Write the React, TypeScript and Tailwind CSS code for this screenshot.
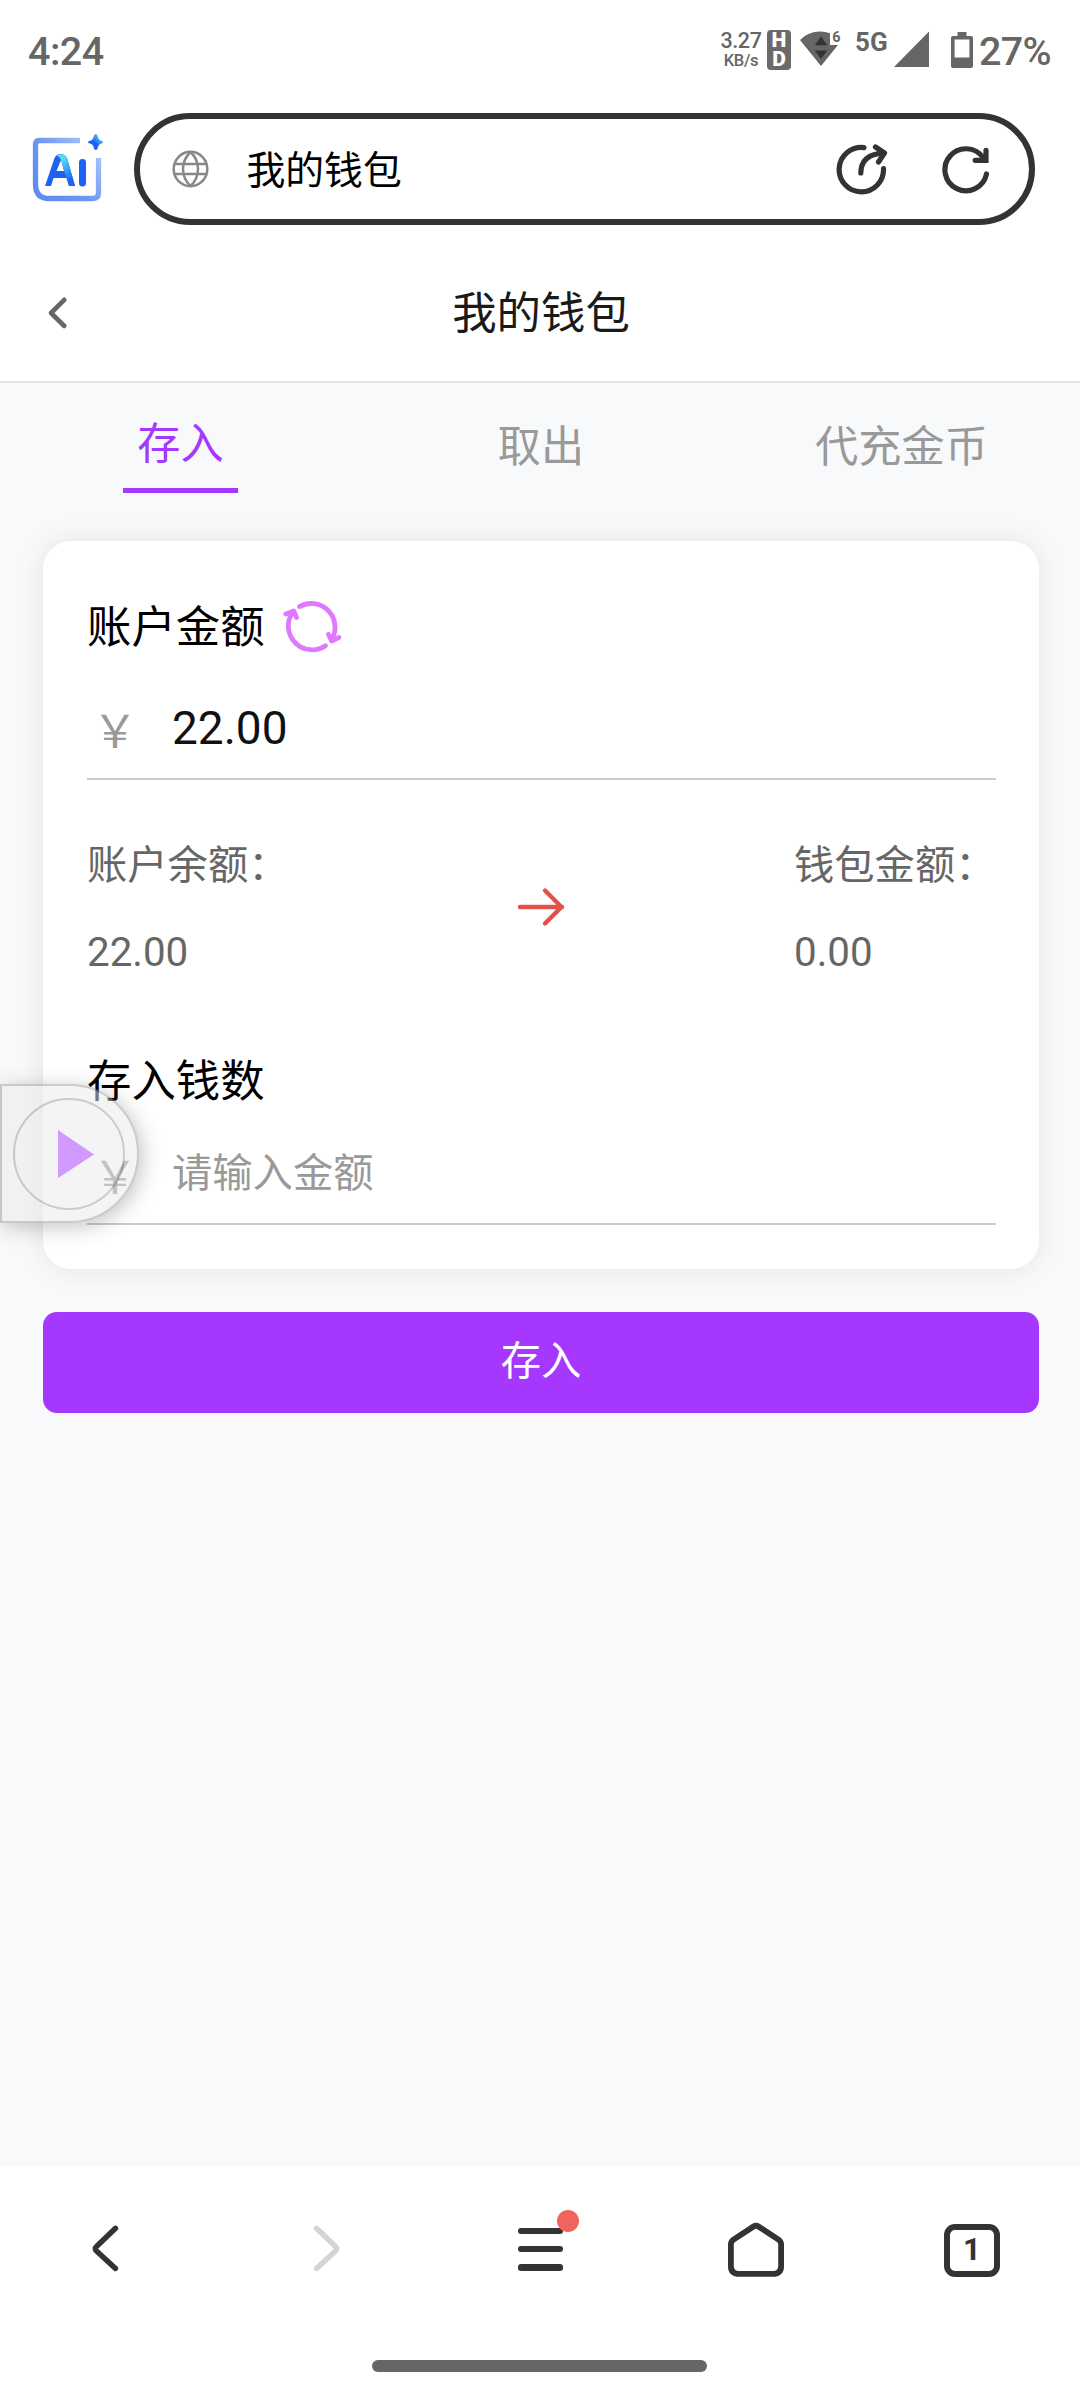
import React from "react";

const cjk = "font-['Noto_Sans_CJK_SC',sans-serif]";

function StatusBar() {
  return (
    <div className="flex h-[100px] items-start pl-[28px] font-['Roboto',sans-serif] font-medium text-[#666]">
      <div className="mt-[32px] text-[39.5px] leading-[40px] tracking-[-0.5px]">4:24</div>
      <div className="mt-[30px] ml-auto flex w-[42px] flex-col items-center">
        <span className="text-[21.5px] leading-[22px] tracking-[-0.4px]">3.27</span>
        <span className="text-[16.5px] leading-[18px] tracking-[-0.3px]">KB/s</span>
      </div>
      <div className="mt-[30px] ml-[5px] flex h-[40px] w-[24px] flex-col items-center rounded-[4px] bg-[#6a6a6a] pt-px text-[21px] font-black text-white">
        <span className="block h-[19px] leading-[19px]">H</span>
        <span className="block h-[19px] leading-[19px]">D</span>
      </div>
      <svg className="mt-[30px] ml-[9px] shrink-0" width="42" height="38" viewBox="0 0 42 38">
        <path d="M0 10 Q8 1.500 20 1.500 Q25.500 1.500 30 3.200 V15 H38 L21 36 Z" fill="#666" />
        <path d="M21 6.500 L27.200 15.200 H14.800 Z M14.800 20.500 H27.200 L21 29 Z" fill="#333" />
        <text x="32.300" y="12.300" fontSize="14.500" fontWeight="700" fill="#666">6</text>
      </svg>
      <div className="mt-[29px] ml-[13px] w-[33px] text-[26px] leading-[26px] font-bold">5G</div>
      <svg className="mt-[31px] ml-[6px] shrink-0" width="36" height="36" viewBox="0 0 36 36">
        <path d="M35 .5 V36 H0 Z" fill="#666" />
      </svg>
      <svg className="mt-[32px] ml-[21px] shrink-0" width="22" height="36" viewBox="0 0 22 36">
        <path fillRule="evenodd" d="M6.500 0 H15.500 V4 H20 Q22 4 22 6 V34 Q22 36 20 36 H2 Q0 36 0 34 V6 Q0 4 2 4 H6.500 Z M3.600 7.500 V25.500 H18.400 V7.500 Z" fill="#666" />
      </svg>
      <div className="mt-[32px] ml-[6px] w-[101px] text-[39.5px] leading-[40px] tracking-[-0.7px]">27%</div>
    </div>
  );
}

function AiLogo() {
  return (
    <svg width="72" height="72" viewBox="0 0 72 72">
      <defs>
        <linearGradient id="frame" x1="0" y1="1" x2="1" y2="0.2">
          <stop offset="0" stopColor="#5b8bf0" />
          <stop offset=".5" stopColor="#6b97f3" />
          <stop offset="1" stopColor="#a9c3fd" />
        </linearGradient>
        <linearGradient id="stroke" x1=".45" y1="0" x2=".8" y2=".8">
          <stop offset=".1" stopColor="#55dcfa" />
          <stop offset="1" stopColor="#1d62f0" />
        </linearGradient>
        <linearGradient id="spark" x1="1" y1="0" x2="0" y2="1">
          <stop offset=".25" stopColor="#43b8fa" />
          <stop offset=".55" stopColor="#1d62f0" />
        </linearGradient>
      </defs>
      <path d="M49 8.500 H8.500 Q4.500 8.500 4.500 13 V52 Q4.500 66.500 18 66.500 H61 Q67.500 66.500 67.500 61 V26" fill="none" stroke="url(#frame)" strokeWidth="5.300" />
      <path d="M14 54 L23.500 26 Q25.500 22 29.500 22 Q34 22 36 26 L44 54 H38 L35.500 46 H22.500 L20 54 Z M25.500 39 H33 L30 28 Z" fill="#1d62f0" />
      <path d="M30 22.200 Q34.500 22.500 36 26 L44 54 H38 L30 28 Q29 25 26 23.500 Q28 22 30 22.200 Z" fill="url(#stroke)" />
      <rect x="48" y="27" width="7" height="27.500" rx="3.400" fill="#1d62f0" />
      <path d="M64.800 2 Q66.500 2 67 5.500 Q68 8.300 70.500 8.800 Q72 9.300 72 10.200 Q72 11 70.500 11.500 Q68 12 67 14.800 Q66.500 18 64.800 18 Q63 18 62.500 14.800 Q61.500 12 59 11.500 Q57 11 57 10.200 Q57 9.300 59 8.800 Q61.500 8.300 62.500 5.500 Q63 2 64.800 2 Z" fill="url(#spark)" />
    </svg>
  );
}

function AddressBar() {
  return (
    <div className="flex h-[138px] items-start pt-[13px] pl-[31px]">
      <div className="mt-[19px] w-[103px]">
        <AiLogo />
      </div>
      <div className="flex h-[112px] w-[901px] items-center rounded-full border-[6px] border-[#333] pl-[31.500px]">
        <svg width="37" height="38" viewBox="0 0 37 38" fill="none" stroke="#888" strokeWidth="2.500">
          <ellipse cx="18.500" cy="19" rx="16.800" ry="17.300" />
          <path d="M18.500 2 Q11 9 11 19 Q11 29 18.500 36 M18.500 2 Q26 9 26 19 Q26 29 18.500 36 M3 14 H34 M3 24 H34" />
        </svg>
        <span className={`${cjk} mb-[5px] ml-[38px] text-[38.800px] leading-[50px] text-black`}>我的钱包</span>
        <div className="ml-auto flex items-center">
          <svg width="52" height="52" viewBox="0 0 52 52" fill="none" stroke="#333" strokeWidth="5.200" strokeLinecap="round" strokeLinejoin="round">
            <path d="M28 4.600 A22.200 22.200 0 1 0 47.500 25.500" />
            <path d="M24.800 30 C25 16 35 10.500 48.500 10 M39.500 4 L48.500 10 L42.500 19" />
          </svg>
          <svg className="mr-[38px] ml-[53px]" width="50" height="52" viewBox="0 0 50 52" fill="none" stroke="#333" strokeWidth="5.200" strokeLinecap="round">
            <path d="M45.500 31 A21 21 0 1 1 42 14.500" />
            <path d="M45 7.300 V17.300 H34.200" />
          </svg>
        </div>
      </div>
    </div>
  );
}

function PageHeader() {
  return (
    <div className="grid h-[145px] grid-cols-[1fr_auto_1fr] items-center border-b-2 border-[#e4e4e4]">
      <svg className="mt-[6px] ml-[46px]" width="24" height="36" viewBox="0 0 24 36" fill="none" stroke="#666" strokeWidth="4.600" strokeLinecap="round" strokeLinejoin="round">
        <path d="M18.300 4.800 L5 18 L18.300 31" />
      </svg>
      <h1 className="pt-px pl-[2px] text-[44.400px] leading-[60px] text-[#1a1a1a]">我的钱包</h1>
    </div>
  );
}

function Tabs() {
  return (
    <div className="grid h-[158px] grid-cols-3 items-start justify-items-center pt-2 text-[43.200px] text-[#999]">
      <div className="ml-px flex h-[102px] w-[115px] items-center justify-center border-b-[5px] border-[#a537ff] leading-[60px] text-[#a537ff]">存入</div>
      <div className="flex h-[104px] items-center pl-[2px] leading-[60px]">取出</div>
      <div className="flex h-[104px] items-center pl-[3px] leading-[60px]">代充金币</div>
    </div>
  );
}

function RefreshIcon() {
  return (
    <svg className="mt-[4px] ml-[18px]" width="58" height="54" viewBox="0 0 58 54" fill="none" stroke="#df78ff" strokeWidth="4.800" strokeLinecap="round" strokeLinejoin="round">
      <path d="M16.500 7.600 A23.800 23.800 0 0 1 49.500 39" />
      <path d="M42.500 46.700 A23.800 23.800 0 0 1 9.200 14" />
      <path d="M2.800 15 L10.800 12 L13.500 18.500" />
      <path d="M45.500 35.500 L48.600 42 L56 38.500" />
    </svg>
  );
}

function BalanceColumn({ label, value }: { label: string; value: string }) {
  return (
    <div className="w-[202px] text-[40.300px] whitespace-nowrap text-[#666]">
      <div className="leading-[91px]">{label}</div>
      <div className="font-['Roboto',sans-serif] leading-[91px]">{value}</div>
    </div>
  );
}

function WalletCard() {
  return (
    <div className="h-[728px] rounded-[28px] bg-white pt-[48px] pr-[43px] pl-[44px] shadow-[0_0_28px_rgba(0,0,0,0.09)]">
      <div className="flex h-[70px] items-center text-[44.400px] leading-[70px] text-black">
        账户金额
        <RefreshIcon />
      </div>
      <div className="mt-[19px] flex h-[102px] items-center border-b-2 border-[#ccc]">
        <span className="w-[85px] pt-[2px] pl-[5.500px] text-[45px] leading-[60px] text-[#999]">￥</span>
        <span className="font-['Roboto',sans-serif] text-[46px] leading-[60px] text-[#111]">22.00</span>
      </div>
      <div className="mt-[36px] flex items-center justify-between">
        <BalanceColumn label="账户余额：" value="22.00" />
        <svg className="-ml-px" width="50" height="42" viewBox="0 0 50 42" fill="none" stroke="#e2524b" strokeWidth="4.400" strokeLinecap="round" strokeLinejoin="round">
          <path d="M4 21 H46 M29 4.500 L45.500 21 L29 37.500" />
        </svg>
        <BalanceColumn label="钱包金额：" value="0.00" />
      </div>
      <div className="mt-[45px] h-[70px] text-[44.400px] leading-[70px] text-black">存入钱数</div>
      <div className="mt-[4px] flex h-[108px] items-center border-b-2 border-[#ccc] text-[#999]">
        <span className="w-[85px] pt-[10px] pl-[5.500px] text-[45px] leading-[60px]">￥</span>
        <span className="text-[40.300px] leading-[60px]">请输入金额</span>
      </div>
    </div>
  );
}

function FloatingPlay() {
  return (
    <div className="absolute top-[1084px] left-0 flex h-[139px] w-[139px] items-center rounded-r-full border-2 border-[#999] bg-[#ebebeb] pl-[11px] opacity-50 shadow-[3px_4px_20px_rgba(0,0,0,0.45)]">
      <div className="flex h-[112px] w-[112px] items-center justify-center rounded-full border-2 border-[#999]">
        <svg className="ml-[13px]" width="36" height="48" viewBox="0 0 36 48">
          <path d="M0 0 L36 24.500 L0 48 Z" fill="#a537ff" />
        </svg>
      </div>
    </div>
  );
}

function BottomNav() {
  return (
    <div className="h-[234px] bg-white">
      <div className="grid h-[168px] grid-cols-5 items-center justify-items-center">
        <svg className="-mt-[2px] -ml-[6px]" width="32" height="50" viewBox="0 0 32 50" fill="none" stroke="#333" strokeWidth="5.400" strokeLinecap="round" strokeLinejoin="round">
          <path d="M26.500 4.300 L7.500 22.500 Q5 24.700 7.500 27 L26.500 44.500" />
        </svg>
        <svg className="-mt-[2px] ml-[5px]" width="32" height="50" viewBox="0 0 32 50" fill="none" stroke="#d4d4d4" strokeWidth="5.400" strokeLinecap="round" strokeLinejoin="round">
          <path d="M5.500 4.300 L24.500 22.500 Q27 24.700 24.500 27 L5.500 44.500" />
        </svg>
        <div className="relative -mt-[2px] flex h-[43px] w-[45px] flex-col justify-between">
          <div className="h-[6.500px] rounded-[3px] bg-[#333]" />
          <div className="h-[6.500px] rounded-[3px] bg-[#333]" />
          <div className="h-[6.500px] rounded-[3px] bg-[#333]" />
          <div className="absolute -top-[18px] left-[39px] h-[22px] w-[22px] rounded-full bg-[#f0645c]" />
        </div>
        <svg width="56" height="56" viewBox="0 0 56 56" fill="none" stroke="#333" strokeWidth="5.800" strokeLinejoin="round">
          <path d="M2.900 22.500 Q2.900 19.500 5.500 17.700 L25.500 4.500 Q28 3 30.500 4.500 L50.500 17.700 Q53.100 19.500 53.100 22.500 V44 Q53.100 51.900 45 51.900 H11 Q2.900 51.900 2.900 44 Z" />
        </svg>
        <div className="flex h-[53px] w-[56px] items-center justify-center rounded-[11px] border-[6px] border-[#333] font-['Roboto',sans-serif] text-[31px] leading-[36px] font-bold text-[#333]">1</div>
      </div>
      <div className="mt-[26px] ml-[372px] h-[12px] w-[335px] rounded-full bg-[#666]" />
    </div>
  );
}

export default function App() {
  return (
    <div className={`${cjk} relative flex h-[2400px] w-[1080px] flex-col overflow-hidden bg-white`}>
      <StatusBar />
      <AddressBar />
      <PageHeader />
      <main className="flex-1 bg-[#f8f9fb]">
        <Tabs />
        <div className="ml-[43px] w-[996px]">
          <WalletCard />
          <button className="mt-[43px] block h-[101px] w-full rounded-[14px] bg-[#a537ff] pb-[10px] text-[40.300px] leading-[60px] text-white">存入</button>
        </div>
      </main>
      <BottomNav />
      <FloatingPlay />
    </div>
  );
}
